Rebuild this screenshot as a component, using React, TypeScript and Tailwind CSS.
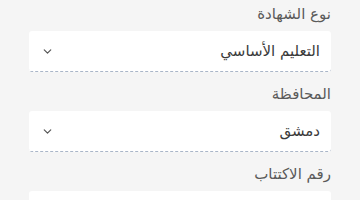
import React from "react";

function Chevron() {
  return (
    <svg width="13" height="13" viewBox="0 0 24 24" fill="none" stroke="#555" strokeWidth="2.2" strokeLinecap="round" strokeLinejoin="round">
      <path d="M6 9l6 6 6-6" />
    </svg>
  );
}

function SelectField({ label, value }: { label: string; value: string }) {
  return (
    <div className="flex flex-col">
      <div className="h-[31px] pt-[2px] text-[15px] leading-[24px] text-[#5a5a5a]">{label}</div>
      <div className="flex h-[41px] items-center justify-between rounded-[3px] border-b border-dashed border-[#aab6c8] bg-white pl-[12px] pr-[11px]">
        <span className="text-[15px] text-[#3a3a3a]">{value}</span>
        <Chevron />
      </div>
    </div>
  );
}

export default function App() {
  return (
    <div dir="rtl" className="h-[200px] w-[360px] overflow-hidden bg-[#f5f5f5] px-[29px] font-['DejaVu_Sans',sans-serif]">
      <div className="flex flex-col gap-[8px]">
        <SelectField label="نوع الشهادة" value="التعليم الأساسي" />
        <SelectField label="المحافظة" value="دمشق" />
        <div className="flex flex-col">
          <div className="h-[31px] pt-[2px] text-[15px] leading-[24px] text-[#5a5a5a]">رقم الاكتتاب</div>
          <div className="h-[41px] rounded-[3px] bg-white" />
        </div>
      </div>
    </div>
  );
}
